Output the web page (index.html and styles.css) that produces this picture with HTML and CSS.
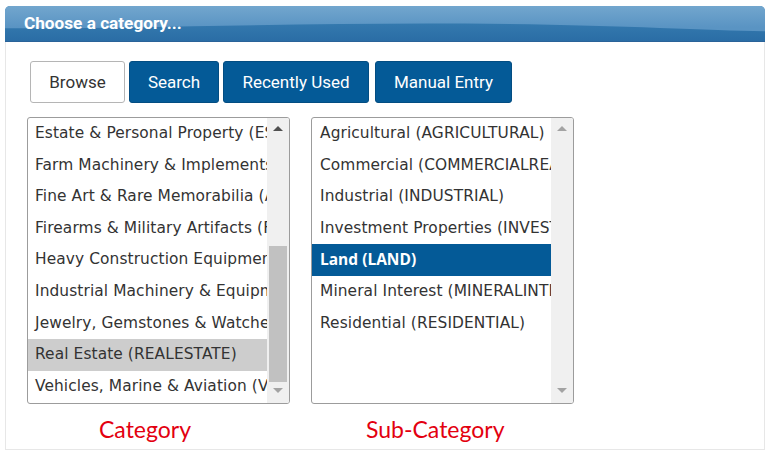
FILE: index.html
```html
<!DOCTYPE html>
<html>
<head>
<meta charset="utf-8">
<link rel="stylesheet" href="styles.css">
</head>
<body>
<div class="card">
  <div class="card-header">
    <svg class="header-bg" viewBox="0 0 760 36" preserveAspectRatio="none" aria-hidden="true">
      <defs>
        <linearGradient id="lite" x1="0" y1="0" x2="0" y2="1">
          <stop offset="0" stop-color="#72a6ce"/>
          <stop offset="0.6" stop-color="#5a94c3"/>
        </linearGradient>
        <linearGradient id="dark" x1="0" y1="0" x2="0" y2="1">
          <stop offset="0" stop-color="#3479ae"/>
          <stop offset="1" stop-color="#2a6da5"/>
        </linearGradient>
      </defs>
      <rect x="0" y="0" width="760" height="36" fill="url(#lite)"/>
      <path d="M0 23 C 150 23, 300 17, 460 18 C 600 19, 700 25, 760 26 L760 36 L0 36 Z" fill="url(#dark)"/>
    </svg>
    <span class="title">Choose a category...</span>
  </div>
  <div class="panel">
    <div class="tabs">
      <button class="tab tab-active">Browse</button>
      <button class="tab tab-search">Search</button>
      <button class="tab tab-recent">Recently Used</button>
      <button class="tab tab-manual">Manual Entry</button>
    </div>
    <div class="lists">
      <div class="col">
        <div class="listbox">
          <ul class="options">
            <li>Estate &amp; Personal Property (ESTATE)</li>
            <li>Farm Machinery &amp; Implements (FARM)</li>
            <li>Fine Art &amp; Rare Memorabilia (ART)</li>
            <li>Firearms &amp; Military Artifacts (FIREARMS)</li>
            <li>Heavy Construction Equipment (HEAVY)</li>
            <li>Industrial Machinery &amp; Equipment (INDUSTRIAL)</li>
            <li>Jewelry, Gemstones &amp; Watches (JEWELRY)</li>
            <li class="sel-gray">Real Estate (REALESTATE)</li>
            <li>Vehicles, Marine &amp; Aviation (VEHICLES)</li>
          </ul>
          <div class="scrollbar">
            <span class="arrow up dark"></span>
            <span class="thumb"></span>
            <span class="arrow down"></span>
          </div>
        </div>
        <div class="label label-cat">Category</div>
      </div>
      <div class="col">
        <div class="listbox">
          <ul class="options options-sub">
            <li>Agricultural (AGRICULTURAL)</li>
            <li>Commercial (COMMERCIALREALESTATE)</li>
            <li>Industrial (INDUSTRIAL)</li>
            <li>Investment Properties (INVESTMENT)</li>
            <li class="sel-blue">Land (LAND)</li>
            <li>Mineral Interest (MINERALINTEREST)</li>
            <li>Residential (RESIDENTIAL)</li>
          </ul>
          <div class="scrollbar">
            <span class="arrow up"></span>
            <span class="spacer"></span>
            <span class="arrow down"></span>
          </div>
        </div>
        <div class="label label-sub">Sub-Category</div>
      </div>
    </div>
  </div>
</div>
</body>
</html>
```
FILE: styles.css
```css
* { box-sizing: border-box; }
html, body { margin: 0; padding: 0; background: #ffffff; }
body { width: 771px; height: 458px; overflow: hidden; }

.card {
  margin: 6px 6px 0 5px;
  width: 760px;
}

.card-header {
  position: relative;
  height: 36px;
  border-radius: 5px 5px 0 0;
  overflow: hidden;
  background: #4f8cbe;
  border-bottom: 1px solid #2a6399;
  display: flex;
  align-items: center;
  padding-left: 19px;
}
.header-bg {
  position: absolute;
  left: 0;
  top: 0;
  width: 100%;
  height: 100%;
}
.title {
  position: relative;
  color: #ffffff;
  font-family: Roboto, "Liberation Sans", sans-serif;
  font-weight: 700;
  font-size: 17.2px;
  margin-top: -1px;
}

.panel {
  height: 408px;
  border: 1px solid #e7e7e7;
  border-top: none;
  padding: 19px 0 0 21px;
}

.tabs {
  display: flex;
  gap: 4px;
  padding-left: 3px;
}
.tab {
  height: 42px;
  border: 1px solid #034d82;
  border-radius: 3px;
  background: #045a97;
  color: #ffffff;
  font-family: Roboto, "Liberation Sans", sans-serif;
  font-size: 17px;
  padding: 0;
}
.tab-active {
  width: 95px;
  background: #ffffff;
  color: #333333;
  border-color: #b5b5b5;
}
.tab-search { width: 90px; }
.tab-recent { width: 146px; }
.tab-manual { width: 137px; margin-left: 2px; }

.lists {
  display: flex;
  gap: 21px;
  margin-top: 14px;
}
.col { display: flex; flex-direction: column; }

.listbox {
  display: flex;
  width: 263px;
  height: 287px;
  border: 1px solid #9c9c9c;
  border-radius: 3px;
  overflow: hidden;
  background: #ffffff;
}
.options {
  list-style: none;
  margin: 0;
  padding: 0;
  flex: 1;
  min-width: 0;
}
.options li {
  height: 31.6px;
  line-height: 31.6px;
  padding-left: 7px;
  white-space: nowrap;
  overflow: hidden;
  font-family: "DejaVu Sans", Verdana, sans-serif;
  font-size: 15.4px;
  color: #333333;
  letter-spacing: 0.1px;
}
.options-sub li { padding-left: 8px; }
.options li.sel-gray { background: #cdcdcd; }
.options li.sel-blue {
  background: #045a97;
  color: #ffffff;
  font-family: "Open Sans", "Noto Sans", sans-serif;
  font-weight: 700;
  font-size: 15.5px;
  letter-spacing: 0;
}

.scrollbar {
  width: 22px;
  background: #f0f0f0;
  display: flex;
  flex-direction: column;
  align-items: center;
}
.arrow {
  width: 0;
  height: 0;
  border-left: 5px solid transparent;
  border-right: 5px solid transparent;
  margin: 8px 0;
}
.arrow.up { border-bottom: 5px solid #a3a3a3; }
.arrow.up.dark { border-bottom-color: #505050; }
.arrow.down { border-top: 5px solid #a3a3a3; margin-top: 6px; margin-bottom: 10px; }
.thumb {
  width: 18px;
  margin-top: 107px;
  flex: 1;
  background: #c1c1c1;
}
.spacer { flex: 1; }

.label {
  font-family: Lato, "Open Sans", sans-serif;
  font-size: 23px;
  color: #e3000f;
  margin-top: 10px;
  line-height: 30px;
}
.label-cat { padding-left: 72px; }
.label-sub { padding-left: 55px; }
```
